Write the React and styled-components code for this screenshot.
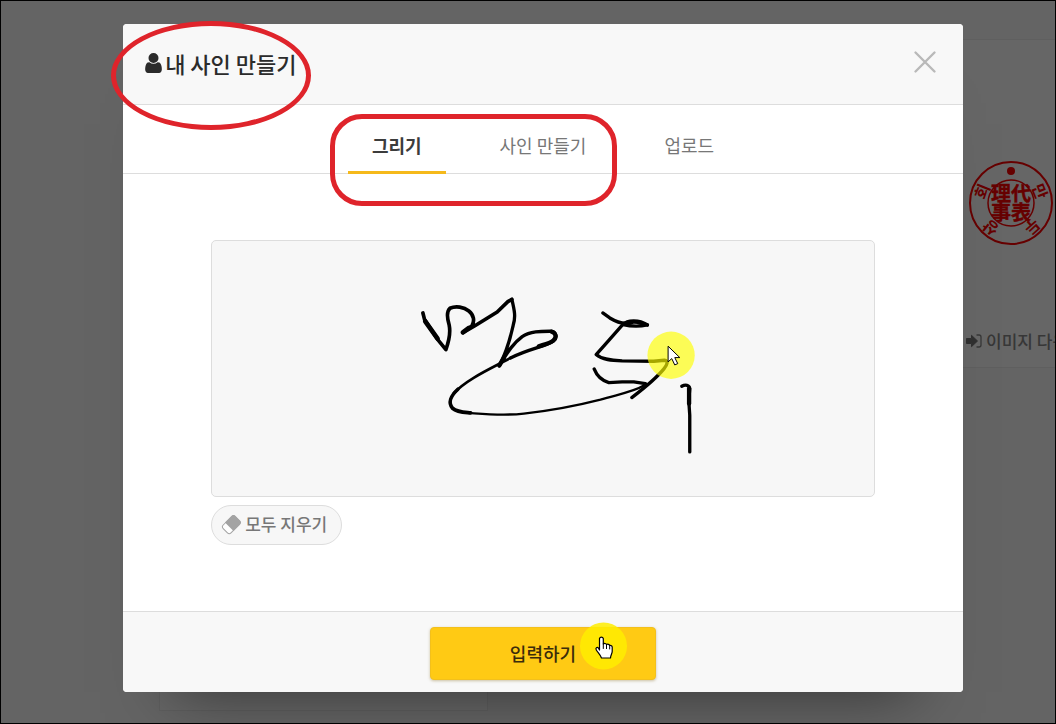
import React, { useState } from 'react';
import styled, { createGlobalStyle, css } from 'styled-components';

const GlobalStyle = createGlobalStyle`
  * {
    box-sizing: border-box;
  }
  body {
    margin: 0;
    color: #2b2b2b;
    font-family: "Noto Sans CJK KR", "Noto Sans", sans-serif;
  }
  button {
    font-family: inherit;
    cursor: pointer;
  }
`;

const Frame = styled.div`
  position: relative;
  min-height: 100vh;
  border: 1px solid #000;
  background: #fbfbfb;
  overflow: hidden;
`;

/* page behind the dialog */

const Page = styled.main`
  display: flex;
  flex-direction: column;
  justify-content: space-between;
  height: calc(100vh - 2px);
  padding: 38px 0 12px 158px;
`;

const Card = styled.section`
  border: 1px solid #eee;
  background: #fff;
`;

const SealCard = styled(Card)`
  display: flex;
  flex-direction: column;
  justify-content: space-between;
  align-self: flex-end;
  width: 240px;
  height: 329px;
  padding: 121px 0 13px 150px;
  border-right: 0;
  overflow: hidden;

  svg {
    flex: none;
  }
`;

const DownloadLink = styled.a`
  display: flex;
  align-items: center;
  gap: 4px;
  color: #8a8a8a;
  font-size: 17px;
  font-weight: 500;
  line-height: 26px;
  text-decoration: none;
  white-space: nowrap;
`;

const EmptyCard = styled(Card)`
  width: 329px;
  height: 200px;
`;

/* dialog */

const Overlay = styled.div`
  position: absolute;
  inset: 0;
  display: flex;
  justify-content: center;
  align-items: flex-start;
  padding: 23px 0 31px 30px;
  background: rgba(0, 0, 0, 0.6);
`;

const Dialog = styled.div`
  width: 82%;
  max-width: 840px;
  border-radius: 4px;
  background: #fff;
  box-shadow: 0 50px 60px -50px rgba(0, 0, 0, 0.5);
`;

const Header = styled.header`
  display: flex;
  justify-content: space-between;
  align-items: center;
  height: 81px;
  padding: 0 24px 2px 22px;
  border-bottom: 1px solid #ddd;
  border-radius: 4px 4px 0 0;
  background: #f8f8f8;
`;

const Title = styled.h1`
  position: relative;
  display: flex;
  align-items: center;
  gap: 3px;
  margin: 0;
  font-size: 22px;
  font-weight: 500;
  line-height: 32px;
`;

const CloseButton = styled.button`
  display: flex;
  padding: 0 0 2px;
  border: 0;
  background: none;
`;

const Tabs = styled.div`
  position: relative;
  display: flex;
  justify-content: center;
  gap: 30px;
  border-bottom: 1px solid #ddd;
`;

const Tab = styled.button`
  margin-bottom: -1px;
  padding: 25px 24px 11px;
  border: 0;
  border-bottom: 3px solid transparent;
  background: none;
  color: #777;
  font-size: 18px;
  font-weight: 400;
  line-height: 30px;

  ${props => props.$active && css`
    border-color: #f5b91b;
    color: #3c3c3c;
    font-weight: 700;
  `}
`;

const Body = styled.div`
  display: flex;
  flex-direction: column;
  align-items: flex-start;
  gap: 8px;
  padding: 66px 88px;
`;

const Pad = styled.div`
  width: 100%;
  border: 1px solid #ddd;
  border-radius: 5px;
  background: #f7f7f7;

  svg {
    display: block;
    width: 100%;
  }
`;

const ClearButton = styled.button`
  display: flex;
  align-items: center;
  gap: 3px;
  height: 40px;
  padding: 0 14px 2px 8px;
  border: 1px solid #ddd;
  border-radius: 20px;
  background: #f7f7f7;
  color: #777;
  font-size: 17px;
  font-weight: 500;
`;

const Footer = styled.footer`
  display: flex;
  justify-content: center;
  padding: 15px 0 12px;
  border-top: 1px solid #ddd;
  border-radius: 0 0 4px 4px;
  background: #f8f8f8;
`;

const SubmitButton = styled.button`
  position: relative;
  width: 226px;
  height: 53px;
  border: 1px solid #f3c01c;
  border-radius: 4px;
  background: #ffca14;
  box-shadow: 0 1px 3px rgba(120, 90, 0, 0.35);
  color: #3b2c0b;
  font-size: 18px;
  font-weight: 500;
`;

/* red marks and pointer that lie over the controls */

const Mark = styled.span`
  position: absolute;
  border: 5px solid #df242b;
  pointer-events: none;
`;

const TitleMark = styled(Mark)`
  top: -26px;
  left: -34px;
  width: 200px;
  height: 109px;
  border-radius: 50%;
`;

const TabsMark = styled(Mark)`
  top: 9px;
  left: calc(50% - 213px);
  width: 287px;
  height: 92px;
  border-radius: 32px;
`;

const Pointer = styled.span`
  position: absolute;
  top: -6px;
  right: 28px;
  width: 47px;
  height: 48px;

  svg {
    display: block;
  }
`;

const UserIcon = () => (
  <svg width="17" height="20" viewBox="0 128 1280 1536" fill="currentColor" aria-hidden="true">
    <path d="M1280 1399q0 109-62.5 187t-150.5 78h-854q-88 0-150.5-78t-62.5-187q0-85 8.5-160.5t31.5-152 58.5-131 94-89 134.5-34.5q131 128 313 128t313-128q76 0 134.5 34.5t94 89 58.5 131 31.5 152 8.5 160.5zm-256-887q0 159-112.5 271.5t-271.5 112.5-271.5-112.5-112.5-271.5 112.5-271.5 271.5-112.5 271.5 112.5 112.5 271.5z" />
  </svg>
);

const CloseIcon = () => (
  <svg width="28" height="28" viewBox="0 0 28 28" fill="none" stroke="#b9b9b9" strokeWidth="2.4" strokeLinecap="round" aria-hidden="true">
    <path d="M4.500 4.500l19 19M23.500 4.500l-19 19" />
  </svg>
);

const EraserIcon = () => (
  <svg width="22" height="22" viewBox="0 0 22 22" aria-hidden="true">
    <g transform="translate(11 12) rotate(-45)">
      <rect x="-8" y="-5.5" width="17" height="11" rx="2.5" fill="#fff" stroke="#a3a3a3" />
      <path d="M-2.5-6H7a2.5 2.5 0 0 1 2.5 2.5v7A2.5 2.5 0 0 1 7 6h-9.500z" fill="#a3a3a3" />
    </g>
  </svg>
);

const SignInIcon = () => (
  <svg width="16" height="14" viewBox="0 0 16 14" aria-hidden="true">
    <path d="M.5 4.500h5V1.300L11.500 7l-6 5.700V9.500h-5z" fill="#777" stroke="#777" strokeLinejoin="round" />
    <path d="M10.500 1H13a2 2 0 0 1 2 2v8a2 2 0 0 1-2 2h-2.500" fill="none" stroke="#888" strokeWidth="1.300" />
  </svg>
);

const Seal = () => (
  <svg width="90" height="84" viewBox="-45 -42 90 84" fill="#f00" textAnchor="middle" role="img" aria-label="만두상회 代表理事">
    <circle r="41" fill="none" stroke="#f00" strokeWidth="2" />
    <circle r="23" fill="none" stroke="#f00" strokeWidth="1.500" />
    <circle cy="-32" r="4" />
    <g fontSize="16" fontWeight="700">
      <text transform="rotate(68) translate(0 -25)">만</text>
      <text transform="rotate(138) translate(0 -26)">두</text>
      <text transform="rotate(219) translate(0 -26)">상</text>
      <text transform="rotate(-68) translate(0 -25)">회</text>
    </g>
    <text fontSize="20" fontWeight="700" stroke="#f00" strokeWidth="0.4">
      <tspan x="0" y="-2">理代</tspan>
      <tspan x="0" y="17">事表</tspan>
    </text>
  </svg>
);

const Signature = () => (
  <svg viewBox="-566 -118 1986 765" fill="none" stroke="#000" strokeLinecap="round" strokeLinejoin="round" role="img" aria-label="서명">
    <path strokeWidth="11" d="M67 98L72 118L111 177L136 208C146 180 150 155 146 135C140 115 136 95 148 84C166 76 190 80 205 92C220 104 223 122 214 137L187 157L222 137L290 95L322 64L334 57" />
    <path strokeWidth="14" d="M74 123L111 175M205 143L187 156" />
    <path strokeWidth="10" d="M334 57C342 90 346 110 338 135C328 180 316 220 296 257C318 222 334 192 365 169C390 152 425 153 453 153C466 155 472 171 460 181C440 198 390 203 330 233" />
    <path strokeWidth="13" d="M453 154C466 157 470 172 458 181C448 189 430 193 415 198M310 232L297 255" />
    <path strokeWidth="8" d="M330 233C275 263 200 296 160 339" />
    <path strokeWidth="11" d="M172 327C150 347 142 368 156 384C170 396 190 396 210 398" />
    <path strokeWidth="7" d="M205 398C260 402 310 407 370 400C450 391 530 376 600 358C650 343 700 335 730 316" />
    <path strokeWidth="10" d="M607 98L628 113C648 125 668 133 690 127C708 122 722 130 741 134" />
    <path strokeWidth="10" d="M668 133C690 138 716 139 741 134M668 133C680 119 715 117 741 134M664 136L625 180L587 223C605 239 635 241 665 242L760 243L792 240C805 242 800 254 791 265C770 291 745 313 694 352" />
    <path strokeWidth="10" d="M581 266C588 284 604 301 625 307L665 305L700 305L735 310" />
    <path strokeWidth="10" d="M844 318C855 312 867 314 868 325L865 360L868 405L868 515" />
    <path strokeWidth="13" d="M866 325L866 370" />
    <circle cx="812" cy="225" r="71" fill="#ff0" fillOpacity="0.65" stroke="none" />
    <path fill="#fff" strokeWidth="3" d="M803 199v46l11-10 9 19 9-4-9-18h14z" />
  </svg>
);

const HandPointer = () => (
  <Pointer aria-hidden="true">
    <svg width="47" height="48" viewBox="0 0 47 48">
      <circle cx="23.500" cy="24" r="23.500" fill="#ffed00" fillOpacity="0.850" />
      <path d="M19.500 28V16.500a2 2 0 0 1 3.800 0V22c1-1 2.800-.6 3.200.6 1.200-.8 2.800-.3 3.200.9 1.300-.5 2.500.3 2.500 1.700v4.300c0 2-1.700 3.800-1.700 6.500h-9c-1-3-3.500-5.200-5.200-8-1.200-2 .9-3.300 2.200-1.800z" fill="#fff" stroke="#000" strokeWidth="1.200" strokeLinejoin="round" />
      <path d="M23.300 22v4.500M26.500 22.600v4M29.700 23.500v3.500" stroke="#000" strokeLinecap="round" />
    </svg>
  </Pointer>
);

const tabs = ['그리기', '사인 만들기', '업로드'];

export default function App() {
  const [active, setActive] = useState(0);

  return (
    <Frame>
      <GlobalStyle />
      <Page>
        <SealCard>
          <Seal />
          <DownloadLink href="#download"><SignInIcon />이미지 다운로드</DownloadLink>
        </SealCard>
        <EmptyCard />
      </Page>

      <Overlay>
        <Dialog role="dialog" aria-modal="true" aria-labelledby="sign-title">
          <Header>
            <Title id="sign-title">
              <UserIcon />내 사인 만들기
              <TitleMark />
            </Title>
            <CloseButton type="button" aria-label="닫기"><CloseIcon /></CloseButton>
          </Header>

          <Tabs role="tablist">
            {tabs.map((label, i) => (
              <Tab
                key={label}
                type="button"
                role="tab"
                aria-selected={i === active}
                $active={i === active}
                onClick={() => setActive(i)}
              >
                {label}
              </Tab>
            ))}
            <TabsMark />
          </Tabs>

          <Body>
            <Pad><Signature /></Pad>
            <ClearButton type="button"><EraserIcon />모두 지우기</ClearButton>
          </Body>

          <Footer>
            <SubmitButton type="button">
              입력하기
              <HandPointer />
            </SubmitButton>
          </Footer>
        </Dialog>
      </Overlay>
    </Frame>
  );
}
